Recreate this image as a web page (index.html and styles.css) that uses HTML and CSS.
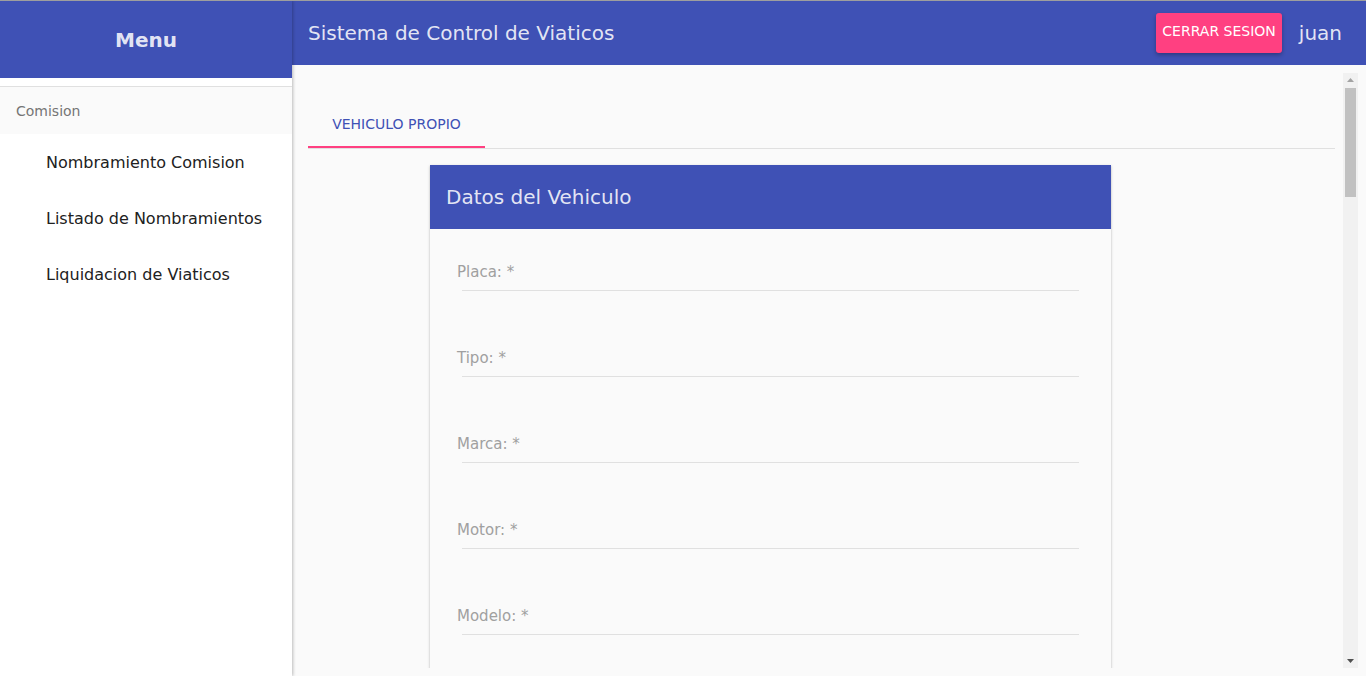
FILE: index.html
```html
<!DOCTYPE html>
<html lang="es">
<head>
<meta charset="utf-8">
<title>Sistema de Control de Viaticos</title>
<link rel="stylesheet" href="styles.css">
</head>
<body>
<div class="app">
  <aside class="sidebar">
    <div class="sidebar-head">Menu</div>
    <div class="sidebar-gap"></div>
    <div class="subheader">Comision</div>
    <nav class="nav">
      <a class="nav-item">Nombramiento Comision</a>
      <a class="nav-item">Listado de Nombramientos</a>
      <a class="nav-item">Liquidacion de Viaticos</a>
    </nav>
  </aside>
  <div class="main">
    <header class="toolbar">
      <div class="title">Sistema de Control de Viaticos</div>
      <button class="btn-logout">CERRAR SESION</button>
      <div class="user">juan</div>
    </header>
    <div class="content">
      <div class="scroller">
        <div class="tabs">
          <div class="tab active">VEHICULO PROPIO</div>
        </div>
        <div class="card">
          <div class="card-head">Datos del Vehiculo</div>
          <div class="card-body">
            <div class="field"><label>Placa: *</label><div class="line"></div></div>
            <div class="field"><label>Tipo: *</label><div class="line"></div></div>
            <div class="field"><label>Marca: *</label><div class="line"></div></div>
            <div class="field"><label>Motor: *</label><div class="line"></div></div>
            <div class="field"><label>Modelo: *</label><div class="line"></div></div>
          </div>
        </div>
      </div>
      <div class="scrollbar">
        <div class="sb-btn"><svg width="15" height="15" viewBox="0 0 15 15"><path d="M4 9h7L7.5 5z" fill="#a3a3a3"/></svg></div>
        <div class="sb-track"><div class="sb-thumb"></div></div>
        <div class="sb-btn"><svg width="15" height="15" viewBox="0 0 15 15"><path d="M4 6h7L7.5 10z" fill="#505050"/></svg></div>
      </div>
    </div>
  </div>
</div>
</body>
</html>
```
FILE: styles.css
```css
* { box-sizing: border-box; }
html, body { margin: 0; padding: 0; height: 100%; }
body {
  font-family: "DejaVu Sans", sans-serif;
  background: #fafafa;
  border-top: 1px solid #9e9e9e;
  overflow: hidden;
}
.app {
  display: flex;
  height: 675px;
}
.sidebar {
  width: 292px;
  flex: none;
  background: #fff;
  box-shadow: 1px 0 3px rgba(0,0,0,.25);
  position: relative;
  z-index: 2;
}
.sidebar-head {
  height: 77px;
  background: #3f51b5;
  color: rgba(255,255,255,.87);
  font-weight: bold;
  font-size: 20px;
  display: flex;
  align-items: center;
  justify-content: center;
  padding-top: 1px;
}
.sidebar-gap {
  height: 9px;
  border-bottom: 1px solid #e0e0e0;
}
.subheader {
  height: 47px;
  background: #fafafa;
  color: #757575;
  font-size: 14px;
  display: flex;
  align-items: center;
  padding-left: 16px;
  padding-top: 1px;
}
.nav { display: flex; flex-direction: column; }
.nav-item {
  height: 56px;
  display: flex;
  align-items: center;
  padding-left: 46px;
  font-size: 16px;
  color: #212121;
}
.main {
  flex: 1;
  display: flex;
  flex-direction: column;
  min-width: 0;
}
.toolbar {
  height: 64px;
  flex: none;
  background: #3f51b5;
  color: rgba(255,255,255,.87);
  display: flex;
  align-items: center;
  padding: 0 24px 0 16px;
}
.title {
  font-size: 20px;
  flex: 1;
}
.btn-logout {
  font-family: inherit;
  height: 40px;
  margin-top: -1px;
  padding: 0 6px 4px;
  border: none;
  border-radius: 3px;
  background: #ff4081;
  color: #fff;
  font-size: 14px;
  box-shadow: 0 2px 4px rgba(0,0,0,.3);
}
.user {
  font-size: 20px;
  margin-left: 17px;
}
.content {
  flex: 1;
  padding: 8px;
  min-height: 0;
  display: flex;
}
.scroller {
  flex: 1;
  overflow: hidden;
  padding: 8px;
}
.scrollbar {
  width: 15px;
  flex: none;
  background: #f1f1f1;
  display: flex;
  flex-direction: column;
}
.sb-btn { height: 15px; flex: none; }
.sb-btn svg { display: block; }
.sb-track { flex: 1; padding: 0 2px; }
.sb-thumb {
  height: 109px;
  background: #c1c1c1;
}
.tabs {
  margin-top: 19px;
  height: 49px;
  border-bottom: 1px solid #e0e0e0;
  display: flex;
}
.tab {
  width: 177px;
  height: 48px;
  display: flex;
  align-items: center;
  justify-content: center;
  font-size: 14px;
  color: #3f51b5;
  border-bottom: 2px solid #ff4081;
  padding-top: 2px;
}
.card {
  margin: 16px 0 0 122px;
  width: 681px;
  background: #fafafa;
  box-shadow: 0 1px 3px rgba(0,0,0,.2), 0 1px 1px rgba(0,0,0,.14), 0 2px 1px -1px rgba(0,0,0,.12);
}
.card-head {
  height: 64px;
  background: #3f51b5;
  color: rgba(255,255,255,.87);
  font-size: 20px;
  display: flex;
  align-items: center;
  padding-left: 16px;
}
.card-body {
  padding: 18px 32px 200px;
}
.field {
  height: 86px;
  padding-top: 15px;
}
.field label {
  display: block;
  height: 20px;
  line-height: 20px;
  font-size: 15px;
  color: #a0a0a0;
  margin-left: -5px;
}
.line {
  margin-top: 8px;
  height: 1px;
  background: #e0e0e0;
}
```
